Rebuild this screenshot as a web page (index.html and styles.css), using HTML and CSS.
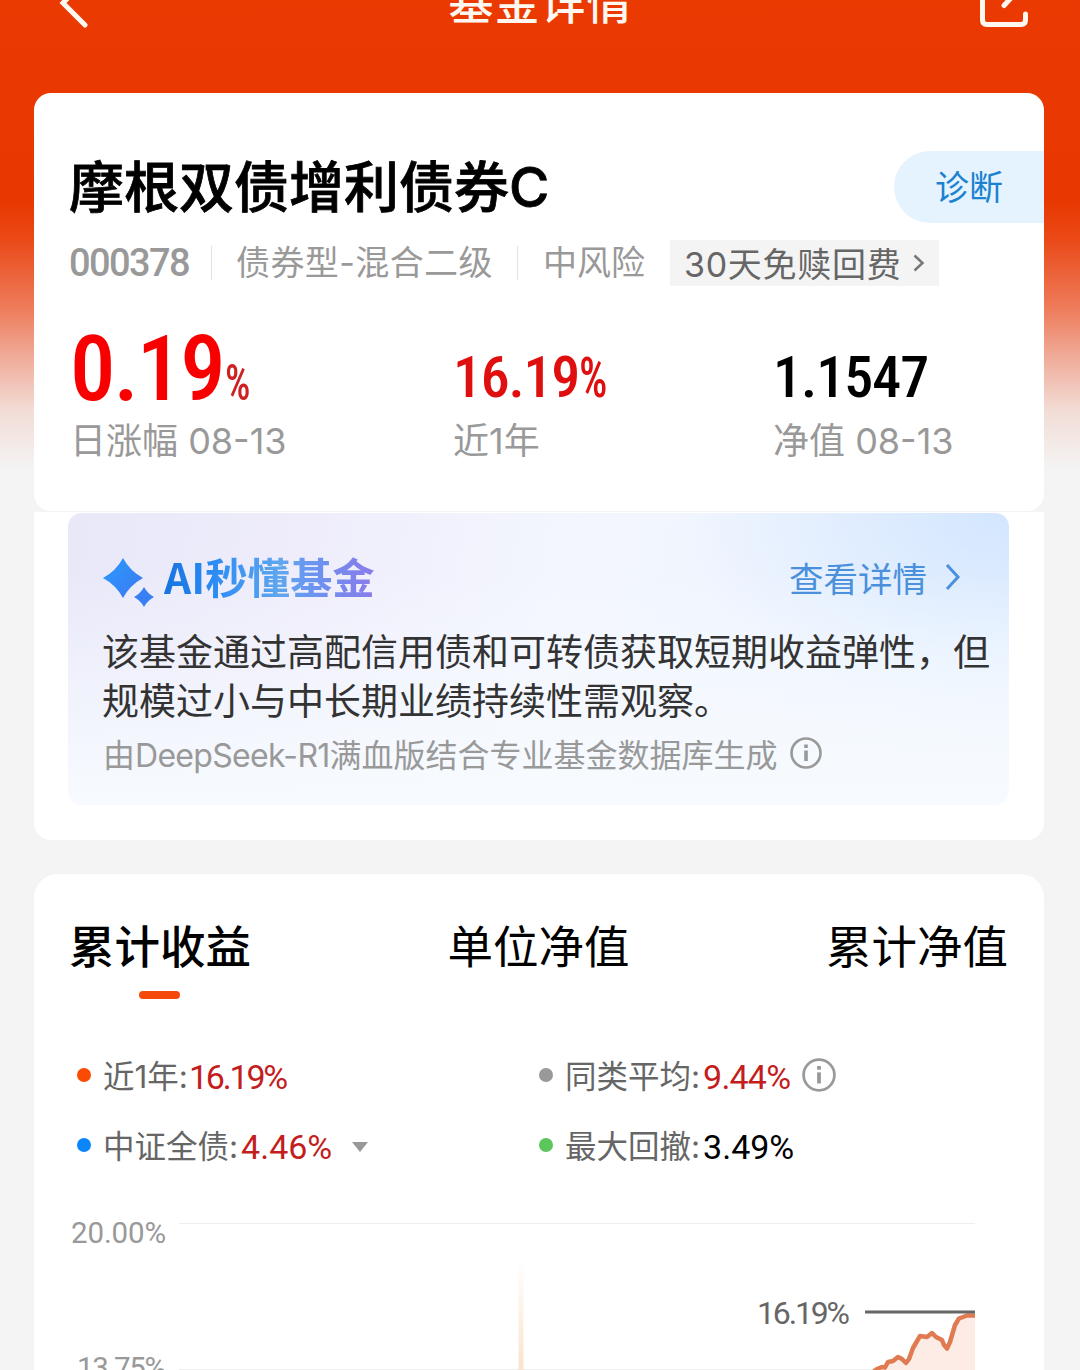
FILE: index.html
```html
<!DOCTYPE html>
<html lang="zh-CN">

<head>
    <meta charset="UTF-8">
    <meta name="viewport" content="width=device-width, initial-scale=1.0">
    <title>基金详情</title>
    <link rel="stylesheet" href="styles.css">
</head>

<body>
    <div class="page">
        <header class="navbar">
            <svg class="nav-back" width="40" height="60" viewBox="0 0 40 60">
                <path d="M31 9 L9 32 L31 54" />
            </svg>
            <h1 class="nav-title">基金详情</h1>
            <svg class="nav-share" width="60" height="60" viewBox="0 0 60 60">
                <path d="M32 8 H17 Q12.500 8 12.500 13 V49 Q12.500 53.500 17 53.500 H51 Q55.500 53.500 55.500 49 V43" />
                <path d="M34 34.500 L56 11" />
            </svg>
        </header>

        <section class="card fund-card">
            <div class="fund-head">
                <h2 class="fund-name">摩根双债增利债券C</h2>
                <a class="diagnose">诊断</a>
            </div>
            <div class="fund-meta">
                <span class="fund-code">000378</span>
                <span class="fund-type">债券型-混合二级</span>
                <span class="fund-risk">中风险</span>
                <span class="fee-tag"><span class="fee-text">30天免赎回费</span>
                    <svg width="12" height="18" viewBox="0 0 12 18"><path d="M1.500 1.500 L9.500 9 L1.500 16.500" /></svg>
                </span>
            </div>
            <div class="stats">
                <div class="stat stat-day">
                    <div class="stat-value"><span class="num">0.19</span><span class="unit">%</span></div>
                    <div class="stat-label">日涨幅 08-13</div>
                </div>
                <div class="stat stat-year">
                    <div class="stat-value"><span class="num">16.19</span><span class="unit">%</span></div>
                    <div class="stat-label">近1年</div>
                </div>
                <div class="stat stat-nav">
                    <div class="stat-value"><span class="num">1.1547</span></div>
                    <div class="stat-label">净值 08-13</div>
                </div>
            </div>
        </section>

        <section class="ai-card">
            <div class="ai-panel">
                <div class="ai-head">
                    <svg class="ai-icon" width="52" height="50" viewBox="0 0 52 50">
                        <defs>
                            <linearGradient id="star" x1="0" y1="0" x2="1" y2="1">
                                <stop offset="0" stop-color="#2a9bff" />
                                <stop offset="1" stop-color="#3d78f0" />
                            </linearGradient>
                        </defs>
                        <path d="M20 0 Q27 13 40 20 Q27 27 20 40 Q13 27 0 20 Q13 13 20 0 Z" fill="url(#star)" />
                        <path d="M41 29 Q44.500 35.500 51 39 Q44.500 42.500 41 49 Q37.500 42.500 31 39 Q37.500 35.500 41 29 Z" fill="#3a80f5" />
                    </svg>
                    <h3 class="ai-title">AI秒懂基金</h3>
                    <a class="ai-link">查看详情
                        <svg width="16" height="28" viewBox="0 0 16 28"><path d="M2 2 L13 14 L2 26" /></svg>
                    </a>
                </div>
                <p class="ai-text">该基金通过高配信用债和可转债获取短期收益弹性，但规模过小与中长期业绩持续性需观察。</p>
                <div class="ai-source">
                    <span>由<span class="model">DeepSeek-R1</span>满血版结合专业基金数据库生成</span>
                    <svg class="info" width="32" height="32" viewBox="0 0 32 32">
                        <circle cx="16" cy="16" r="14.500" />
                        <path d="M16 13.500 V24" /><path d="M16 7.500 V11" />
                    </svg>
                </div>
            </div>
        </section>

        <section class="card chart-card">
            <nav class="tabs">
                <a class="tab active">累计收益</a>
                <a class="tab">单位净值</a>
                <a class="tab">累计净值</a>
            </nav>
            <div class="legend">
                <div class="legend-item">
                    <i class="dot orange"></i><span class="name">近1年:</span><span class="value up tight">16.19%</span>
                </div>
                <div class="legend-item">
                    <i class="dot gray"></i><span class="name">同类平均:</span><span class="value up average">9.44%</span>
                    <svg class="info" width="34" height="34" viewBox="0 0 32 32">
                        <circle cx="16" cy="16" r="14.500" />
                        <path d="M16 13.500 V24" /><path d="M16 7.500 V11" />
                    </svg>
                </div>
                <div class="legend-item">
                    <i class="dot blue"></i><span class="name">中证全债:</span><span class="value up">4.46%</span>
                    <i class="caret"></i>
                </div>
                <div class="legend-item">
                    <i class="dot green"></i><span class="name">最大回撤:</span><span class="value">3.49%</span>
                </div>
            </div>
            <svg class="chart" width="1010" height="200" viewBox="34 1200 1010 200">
                <defs>
                    <linearGradient id="beam" x1="0" y1="0" x2="0" y2="1">
                        <stop offset="0" stop-color="#fbe3c8" stop-opacity="0" />
                        <stop offset="1" stop-color="#f9e2ca" />
                    </linearGradient>
                </defs>
                <rect class="grid" x="179" y="1223" width="796" height="1" />
                <rect class="grid" x="179" y="1369" width="796" height="1" />
                <rect x="518.500" y="1258" width="5" height="120" fill="url(#beam)" />
                <text class="axis" x="71" y="1243" textLength="95">20.00%</text>
                <text class="axis" x="77" y="1378" textLength="89">13.75%</text>
                <path class="area" d="M868 1376 L877 1369 L882 1367 L885 1367.500 L888 1362 L893 1361 L898 1357 L902 1359 L906 1363 L909 1359 L913 1348 L920 1336 L927 1337 L932 1333 L936 1337 L942 1340 L947 1348.500 L950 1342 L955 1325 L959 1318.500 L967 1315.500 L975 1315.500 V1400 H868 Z" />
                <path class="line" d="M868 1376 L877 1369 L882 1367 L885 1367.500 L888 1362 L893 1361 L898 1357 L902 1359 L906 1363 L909 1359 L913 1348 L920 1336 L927 1337 L932 1333 L936 1337 L942 1340 L944 1345 L947 1348.500 L950 1342 L955 1325 L959 1318.500 L967 1315.500 L975 1315.500" />
                <rect x="865" y="1310.500" width="110" height="3" fill="#666" />
                <text class="mark" x="757" y="1324" textLength="93">16.19%</text>
            </svg>
        </section>
    </div>
</body>

</html>
```

FILE: styles.css
```css
* {
    box-sizing: border-box;
}

body {
    margin: 0;
    background-color: #f4f4f4;
    font-family: Inter, "Noto Sans CJK SC", sans-serif;
    color: #000;
}

h1,
h2,
h3,
p {
    margin: 0;
}

svg {
    display: block;
    flex: none;
}

.page {
    width: 1080px;
    height: 1370px;
    overflow: hidden;
    background: linear-gradient(#ea3a02 0, #e83700 200px, #ea4a18 240px, #ee7d5d 310px, #f0b3a2 365px, #f2dcd5 410px, #f4f4f4 470px) no-repeat;
}

/* top bar */
.navbar {
    display: flex;
    justify-content: space-between;
    height: 93px;
    padding: 0 50px 0 54px;
    color: #fff8f0;
}

.navbar svg {
    margin-top: -29px;
    fill: none;
    stroke: #fff8f0;
    stroke-width: 5;
    stroke-linecap: round;
}

.nav-title {
    margin-top: -30px;
    margin-left: 17px;
    height: 68px;
    line-height: 68px;
    font-size: 45px;
    font-weight: 500;
    letter-spacing: 1px;
}

.card {
    width: 1010px;
    margin: 0 36px 0 34px;
    background-color: #fff;
}

/* fund summary */
.fund-card {
    height: 418px;
    padding-top: 58px;
    border-radius: 17px;
}

.fund-head {
    display: flex;
    justify-content: space-between;
    padding-left: 35px;
    height: 72px;
}

.fund-name {
    font-size: 55px;
    line-height: 73px;
    font-weight: 500;
    -webkit-text-stroke: 0.8px #000;
}

.diagnose {
    width: 150px;
    padding-left: 41px;
    border-radius: 36px 0 0 36px;
    background-color: #e5f3ff;
    color: #1c82cf;
    font-size: 34px;
    line-height: 74px;
}

.fund-meta {
    display: flex;
    align-items: center;
    height: 46px;
    margin-top: 17px;
    padding-left: 35px;
    font-size: 34px;
    color: #999;
    white-space: nowrap;
}

.fund-code {
    width: 142px;
    font-family: Roboto, sans-serif;
    font-size: 38px;
    font-weight: 500;
    letter-spacing: -1.6px;
    line-height: 48px;
}

.fund-type,
.fund-risk {
    display: flex;
    align-items: center;
    height: 34px;
    border-left: 1px solid #e2e2e2;
    padding-left: 24px;
    line-height: 32px;
}

.fund-type {
    width: 306px;
    letter-spacing: 0.4px;
}

.fund-risk {
    width: 153px;
    padding-left: 25px;
}

.fee-tag {
    display: flex;
    align-items: center;
    gap: 12px;
    width: 269px;
    height: 46px;
    padding-left: 14px;
    background-color: #f4f4f4;
    color: #666;
    letter-spacing: 0.7px;
}

.fee-text {
    margin-top: -2px;
}

.fee-tag svg {
    fill: none;
    stroke: #777;
    stroke-width: 2.5;
}

.stats {
    display: flex;
    padding-left: 36px;
    margin-top: 35px;
}

.stat-day {
    width: 383px;
}

.stat-year {
    width: 320px;
}

.stat-value {
    display: flex;
    align-items: baseline;
    height: 96px;
    font-family: Roboto, sans-serif;
    font-weight: 500;
    font-stretch: 85%;
    line-height: 112px;
    font-size: 58px;
}

.stat-day .stat-value {
    color: #f80000;
    font-size: 91px;
    line-height: 97px;
    letter-spacing: -2px;
}

.stat-year .stat-value {
    color: #e00f0f;
    letter-spacing: -1.2px;
}

.stat-nav .stat-value {
    letter-spacing: -1px;
}

.unit {
    display: inline-block;
    transform: scaleX(0.8);
    transform-origin: left;
    font-stretch: 75%;
    font-weight: 500;
}

.stat-year .unit {
    font-size: 56px;
}

.stat-day .unit {
    margin-top: 5px;
    margin-left: 1px;
    font-size: 50px;
    color: #c22;
}

.stat-label {
    font-size: 36px;
    line-height: 48px;
    color: #999;
    white-space: nowrap;
}

/* AI summary */
.ai-card {
    width: 1010px;
    height: 328px;
    margin: 1px 36px 34px 34px;
    padding: 1px 35px 0 34px;
    background-color: #fff;
    border-radius: 0 0 17px 17px;
}

.ai-panel {
    height: 292px;
    padding: 37px 0 0 35px;
    border-radius: 14px;
    background:
        linear-gradient(rgba(246, 251, 255, 0) 20%, #f7fbff 100%),
        radial-gradient(ellipse 330px 200px at 100% 0, #d3e6ff, rgba(211, 230, 255, 0)),
        linear-gradient(100deg, #e8e8f9 0, #efedfb 25%, #f3f6fe 50%, #ecf4ff 100%);
}

.ai-head {
    display: flex;
    align-items: center;
    height: 56px;
}

.ai-icon {
    margin-top: 10px;
}

.ai-title {
    margin-top: -4px;
    margin-left: 9px;
    font-family: "Noto Sans CJK SC", sans-serif;
    font-size: 42.4px;
    line-height: 56px;
    font-weight: 700;
    color: transparent;
    background: linear-gradient(90deg, #1773e0 0, #2e8df5 25%, #5fa6ee 55%, #6e90f0 75%, #8a7bea 100%);
    -webkit-background-clip: text;
    background-clip: text;
}

.ai-link {
    display: flex;
    align-items: center;
    gap: 18px;
    margin-top: -2px;
    margin-left: auto;
    margin-right: 48px;
    font-size: 34.5px;
    color: #4a90dc;
}

.ai-link svg {
    fill: none;
    stroke: #4a90dc;
    stroke-width: 3;
}

.ai-text {
    width: 895px;
    margin-top: 22px;
    margin-left: -1px;
    font-size: 37px;
    line-height: 49px;
    color: #333;
}

.ai-source {
    display: flex;
    align-items: center;
    gap: 12px;
    height: 44px;
    margin-top: 5px;
    font-size: 32px;
    color: #999;
    white-space: nowrap;
}

.model {
    letter-spacing: -0.7px;
}

.info {
    fill: none;
    stroke: #999;
    stroke-width: 2.6;
}

.info path {
    stroke-width: 3.6;
}

/* performance chart */
.chart-card {
    height: 560px;
    padding-top: 40px;
    border-radius: 24px;
}

.tabs {
    display: flex;
    justify-content: space-between;
    height: 85px;
    padding: 0 36px 0 35px;
}

.tab {
    font-size: 45.5px;
    line-height: 68px;
}

.tab.active {
    font-weight: 500;
}

.tab.active::after {
    content: "";
    display: block;
    width: 41px;
    height: 8px;
    margin: 9px 0 0 70px;
    border-radius: 4px;
    background-color: #f5490b;
}

.legend {
    display: grid;
    grid-template-columns: 462px 1fr;
    grid-auto-rows: 70px;
    margin-top: 41px;
    padding-left: 43px;
}

.legend-item {
    display: flex;
    align-items: center;
    font-size: 31.5px;
    white-space: nowrap;
}

.dot {
    width: 14px;
    height: 14px;
    margin-right: 12px;
    border-radius: 50%;
}

.orange {
    background-color: #fa4b04;
}

.gray {
    background-color: #999;
}

.blue {
    background-color: #0a86fa;
}

.green {
    background-color: #5bc65b;
}

.name {
    margin-top: -2px;
    color: #666;
}

.value {
    margin-top: 3px;
    margin-left: 3px;
    font-family: Roboto, sans-serif;
    font-size: 34px;
}

.tight {
    margin-left: 1px;
    letter-spacing: -2.2px;
}

.average {
    letter-spacing: -0.8px;
}

.up {
    color: #c41d1d;
}

.legend .info {
    margin-left: 12px;
}

.caret {
    margin-left: 20px;
    margin-top: 3px;
    border: 8.5px solid transparent;
    border-top: 10px solid #999;
    border-bottom: 0;
}

.chart {
    margin-top: 20px;
}

.grid {
    fill: #efefef;
}

.axis {
    font-family: Roboto, sans-serif;
    font-size: 29.5px;
    fill: #999;
}

.mark {
    font-family: Roboto, sans-serif;
    font-size: 32px;
    fill: #666;
}

.area {
    fill: #fdece5;
}

.line {
    fill: none;
    stroke: #e07a50;
    stroke-width: 4.5;
    stroke-linejoin: round;
}
```
